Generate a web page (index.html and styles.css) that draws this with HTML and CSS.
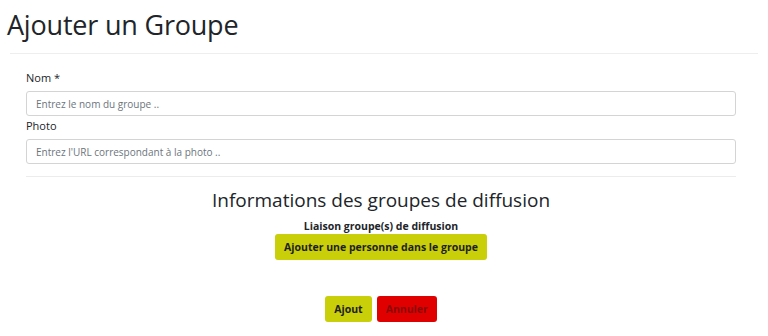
FILE: index.html
```html
<!DOCTYPE html>
<html lang="fr">
<head>
    <meta charset="UTF-8">
    <title>Ajouter un Groupe</title>
    <link rel="stylesheet" href="styles.css">
</head>
<body>
    <h1 class="page-title">Ajouter un Groupe</h1>
    <hr class="sep-top">

    <form class="group-form">
        <!-- Champs principaux -->
        <label class="field-label">Nom *</label>
        <input class="field-input" type="text" placeholder="Entrez le nom du groupe ..">
        <label class="field-label field-label-photo">Photo</label>
        <input class="field-input" type="text" placeholder="Entrez l'URL correspondant à la photo ..">

        <hr class="sep-form">

        <!-- Groupes de diffusion -->
        <div class="diffusion">
            <h2>Informations des groupes de diffusion</h2>
            <div class="diffusion-label">Liaison groupe(s) de diffusion</div>
            <button type="button" class="btn btn-yellow">Ajouter une personne dans le groupe</button>
        </div>

        <div class="actions">
            <button type="submit" class="btn btn-yellow">Ajout</button>
            <button type="button" class="btn btn-red">Annuler</button>
        </div>
    </form>
</body>
</html>
```

FILE: styles.css
```css
body {
    margin: 0;
    background: #fff;
    font-family: 'Open Sans', 'Noto Sans', sans-serif;
    color: #212529;
}

.page-title {
    font-size: 27px;
    font-weight: 500;
    margin: 0;
    padding: 6px 0 0 7px;
    line-height: 38px;
    letter-spacing: -0.2px;
}

.sep-top {
    border: 0;
    border-top: 1px solid #eeeeee;
    margin: 9px 10px 0 10px;
}

.group-form {
    margin: 0 32px 0 26px;
    padding-top: 16px;
}

.field-label {
    display: block;
    font-size: 11px;
    line-height: 16px;
    margin-bottom: 5px;
}

.field-label-photo {
    margin-top: 2px;
    margin-bottom: 5px;
}

.field-input {
    display: block;
    box-sizing: border-box;
    width: 100%;
    height: 25px;
    padding: 0 9px;
    border: 1px solid #d4d4d4;
    border-radius: 3px;
    font-family: inherit;
    font-size: 10px;
    color: #495057;
}

.field-input::placeholder {
    color: #6c757d;
}

.sep-form {
    border: 0;
    border-top: 1px solid #ececec;
    margin: 12px 0 0 0;
}

.diffusion {
    text-align: center;
}

.diffusion h2 {
    font-size: 19px;
    font-weight: 500;
    margin: 10px 0 0;
    line-height: 26px;
}

.diffusion-label {
    font-size: 10.5px;
    font-weight: 700;
    line-height: 14px;
    margin-top: 6px;
}

.btn {
    border: none;
    border-radius: 3px;
    font-family: inherit;
    font-size: 10.5px;
    font-weight: 700;
    height: 26px;
    padding: 0 9px;
    cursor: pointer;
}

.btn-yellow {
    background: #c9cf08;
    color: #1e1e1e;
}

.btn-red {
    background: #e00000;
    color: #8a0a0a;
}

.diffusion .btn {
    display: block;
    margin: 1px auto 0;
}

.actions {
    display: flex;
    justify-content: center;
    gap: 5px;
    margin-top: 36px;
}
```
